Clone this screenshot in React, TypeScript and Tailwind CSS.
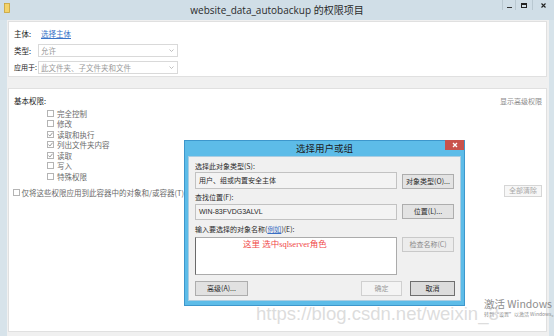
import React from "react";
import clsx from "clsx";

const perms: [string, boolean][] = [
  ["完全控制", false],
  ["修改", false],
  ["读取和执行", true],
  ["列出文件夹内容", true],
  ["读取", true],
  ["写入", false],
  ["特殊权限", false],
];

const Check = ({ checked }: { checked?: boolean }) => (
  <span className="flex h-[7px] w-[7px] shrink-0 items-center justify-center border border-[#b4b4b4] bg-white">
    {checked && (
      <svg width="5" height="5" viewBox="0 0 5 5">
        <path d="M0.4 2.6 L1.9 4 L4.6 0.7" stroke="#8a8a8a" strokeWidth="0.9" fill="none" />
      </svg>
    )}
  </span>
);

const Select = ({ value }: { value: string }) => (
  <div className="flex h-[13px] w-[140px] items-center justify-between border border-[#d9d9d9] bg-white pl-[2px] pr-[3px]">
    <span className="text-[7.5px] leading-none text-[#9a9a9a]">{value}</span>
    <svg width="5" height="3" viewBox="0 0 5 3">
      <path d="M0.5 0.5 L2.5 2.5 L4.5 0.5" stroke="#b0b0b0" strokeWidth="0.8" fill="none" />
    </svg>
  </div>
);

const Btn = ({ children, className }: { children: React.ReactNode; className?: string }) => (
  <div
    className={clsx(
      "flex h-[15px] shrink-0 items-center justify-center border text-[7px] leading-none",
      className
    )}
  >
    {children}
  </div>
);

const PickDialog = () => (
  <div className="absolute left-[184px] top-[140px] flex h-[166px] w-[281px] flex-col border border-[#3d97cc] bg-[#5dbce8]">
    <div className="relative flex h-[15px] shrink-0 items-center justify-center">
      <span className="text-[9.5px] leading-none text-[#1d1d1d]">选择用户或组</span>
      <div className="absolute right-0 top-[-1px] flex h-[10px] w-[19px] items-center justify-center bg-[#c9524b]">
        <svg width="6" height="6" viewBox="0 0 6 6">
          <path d="M1 1 L5 5 M5 1 L1 5" stroke="#fff" strokeWidth="1.3" />
        </svg>
      </div>
    </div>
    <div className="mx-[3px] mb-[4px] flex flex-1 flex-col border border-[#aacde2] bg-[#f0f0f0] pl-[6px] text-[#2a2a2a]">
      <div className="mt-[4px] flex h-[10px] items-center text-[7px]">选择此对象类型(S):</div>
      <div className="mt-[1px] flex items-end gap-[5px]">
        <div className="flex h-[17px] w-[202px] items-center border border-[#c2c2c2] bg-[#f3f3f3] pl-[3px] text-[7px]">
          用户、组或内置安全主体
        </div>
        <Btn className="w-[52px] border-[#adadad] bg-[#e3e3e3]">对象类型(O)...</Btn>
      </div>
      <div className="mt-[3px] flex h-[10px] items-center text-[7px]">查找位置(F):</div>
      <div className="mt-[2px] flex items-start gap-[5px]">
        <div className="flex h-[16px] w-[202px] items-center border border-[#c2c2c2] bg-[#f3f3f3] pl-[3px] text-[7px] font-['Liberation_Sans',sans-serif]">
          WIN-83FVDG3ALVL
        </div>
        <Btn className="w-[52px] border-[#adadad] bg-[#e3e3e3]">位置(L)...</Btn>
      </div>
      <div className="mt-[4px] flex h-[10px] items-center text-[7px]">
        输入要选择的对象名称(<span className="text-[#3a6fc4] underline">例如</span>)(E):
      </div>
      <div className="mt-[3px] flex items-start gap-[5px]">
        <div className="relative h-[38px] w-[202px] border border-[#ababab] border-l-[#6a6a6a] bg-white">
          <span className="absolute left-[47px] top-[2px] text-[8.5px] leading-none text-[#f04848] font-['Liberation_Serif','Noto_Sans_CJK_SC',serif]">
            这里 选中sqlserver角色
          </span>
        </div>
        <Btn className="w-[52px] border-[#c9c9c9] bg-[#ececec] text-[#8a8a8a]">检查名称(C)</Btn>
      </div>
      <div className="mt-[6px] flex items-center">
        <Btn className="w-[53px] border-[#adadad] bg-[#e1e1e1]">高级(A)...</Btn>
        <Btn className="ml-[113px] w-[41px] border-[#d0d0d0] bg-[#f4f4f4] text-[#9a9a9a]">确定</Btn>
        <Btn className="ml-[8px] w-[45px] border-[#6f6f6f] bg-[#dcdcdc]">取消</Btn>
      </div>
    </div>
  </div>
);

export default function App() {
  return (
    <div className="relative flex h-[336px] w-[554px] flex-col overflow-hidden bg-[#d7e3ea] font-['Noto_Sans_CJK_SC',sans-serif] text-[#222]">
      {/* title bar */}
      <div className="relative flex h-[20px] shrink-0 items-center justify-center bg-[#d0dee7]">
        <svg className="absolute left-[4px] top-[3px]" width="6" height="10" viewBox="0 0 6 10">
          <rect x="0.5" y="0.5" width="5" height="9" fill="#f3d36a" stroke="#c9a235" strokeWidth="0.8" />
        </svg>
        <span className="text-[10px] leading-none text-[#2b2b2b] font-['Open_Sans','Noto_Sans_CJK_SC',sans-serif]">
          website_data_autobackup 的权限项目
        </span>
        <div className="absolute right-0 top-0 flex h-[10px]">
          <div className="flex w-[13px] items-end justify-center border-l border-[#b9c8d1] pb-[2px]">
            <span className="h-[1px] w-[5px] bg-[#333]" />
          </div>
          <div className="flex w-[17px] items-center justify-center border-l border-[#b9c8d1]">
            <span className="h-[5px] w-[6px] border border-t-2 border-[#222]" />
          </div>
          <div className="flex w-[22px] items-center justify-center border-l border-[#b9c8d1]">
            <svg width="5" height="5" viewBox="0 0 5 5">
              <path d="M0.5 0.5 L4.5 4.5 M4.5 0.5 L0.5 4.5" stroke="#222" strokeWidth="1.1" />
            </svg>
          </div>
        </div>
      </div>

      {/* body */}
      <div className="flex flex-1 flex-col pl-[7px] pr-[5px]">
        <div className="flex flex-1 flex-col bg-[#f0f0f0] pl-[1px] pr-[2px] pt-[1px] pb-[4px]">
          <div className="flex h-[56px] shrink-0 flex-col border border-[#e0e0e0] bg-white pl-[5px] text-[7.5px]">
            <div className="mt-[5px] flex h-[14px] items-center">
              <span className="w-[27px] shrink-0 whitespace-nowrap">主体:</span>
              <span className="text-[7.5px] text-[#3a74c8] underline">选择主体</span>
            </div>
            <div className="mt-[3px] flex h-[13px] items-center">
              <span className="w-[24px] shrink-0 whitespace-nowrap">类型:</span>
              <Select value="允许" />
            </div>
            <div className="mt-[4px] flex h-[13px] items-center">
              <span className="w-[24px] shrink-0 whitespace-nowrap text-[7px]">应用于:</span>
              <Select value="此文件夹、子文件夹和文件" />
            </div>
          </div>

          <div className="mt-[11px] flex flex-1 flex-col border border-[#e0e0e0] bg-white pr-[4px]">
            <div className="mt-[6px] flex h-[12px] items-center justify-between pl-[5px]">
              <span className="text-[7.5px]">基本权限:</span>
              <span className="text-[7px] text-[#8c8c8c]">显示高级权限</span>
            </div>
            <div className="mt-[1px] flex flex-col pl-[38px]">
              {perms.map(([label, on]) => (
                <div key={label} className="flex h-[10.5px] items-center gap-[3px]">
                  <Check checked={on} />
                  <span className="text-[7.5px] leading-none text-[#6a6a6a]">{label}</span>
                </div>
              ))}
            </div>
            <div className="mt-[3px] flex h-[12px] items-center justify-between pl-[4px]">
              <div className="mt-[4px] flex items-center gap-[1.5px]">
                <Check />
                <span className="text-[7.5px] leading-none text-[#6a6a6a]">
                  仅将这些权限应用到此容器中的对象和/或容器(T)
                </span>
              </div>
              <div className="flex h-[12px] w-[38px] items-center justify-center border border-[#d6d6d6] bg-[#f7f7f7] text-[7px] text-[#a8a8a8]">
                全部清除
              </div>
            </div>
          </div>
        </div>
      </div>

      <PickDialog />

      {/* watermarks */}
      <span className="pointer-events-none absolute left-[256px] top-[305px] whitespace-nowrap text-[18.5px] leading-none text-[#d4d4d4]/80 font-['Liberation_Sans',sans-serif]">
        https://blog.csdn.net/weixin_3
      </span>
      <div className="pointer-events-none absolute left-[484px] top-[298px] flex flex-col whitespace-nowrap text-[#8e8e8e]">
        <span className="text-[10.5px] leading-[12px]">激活 Windows</span>
        <span className="text-[5px] leading-[8px]">转到“设置”以激活 Windows。</span>
      </div>
    </div>
  );
}
